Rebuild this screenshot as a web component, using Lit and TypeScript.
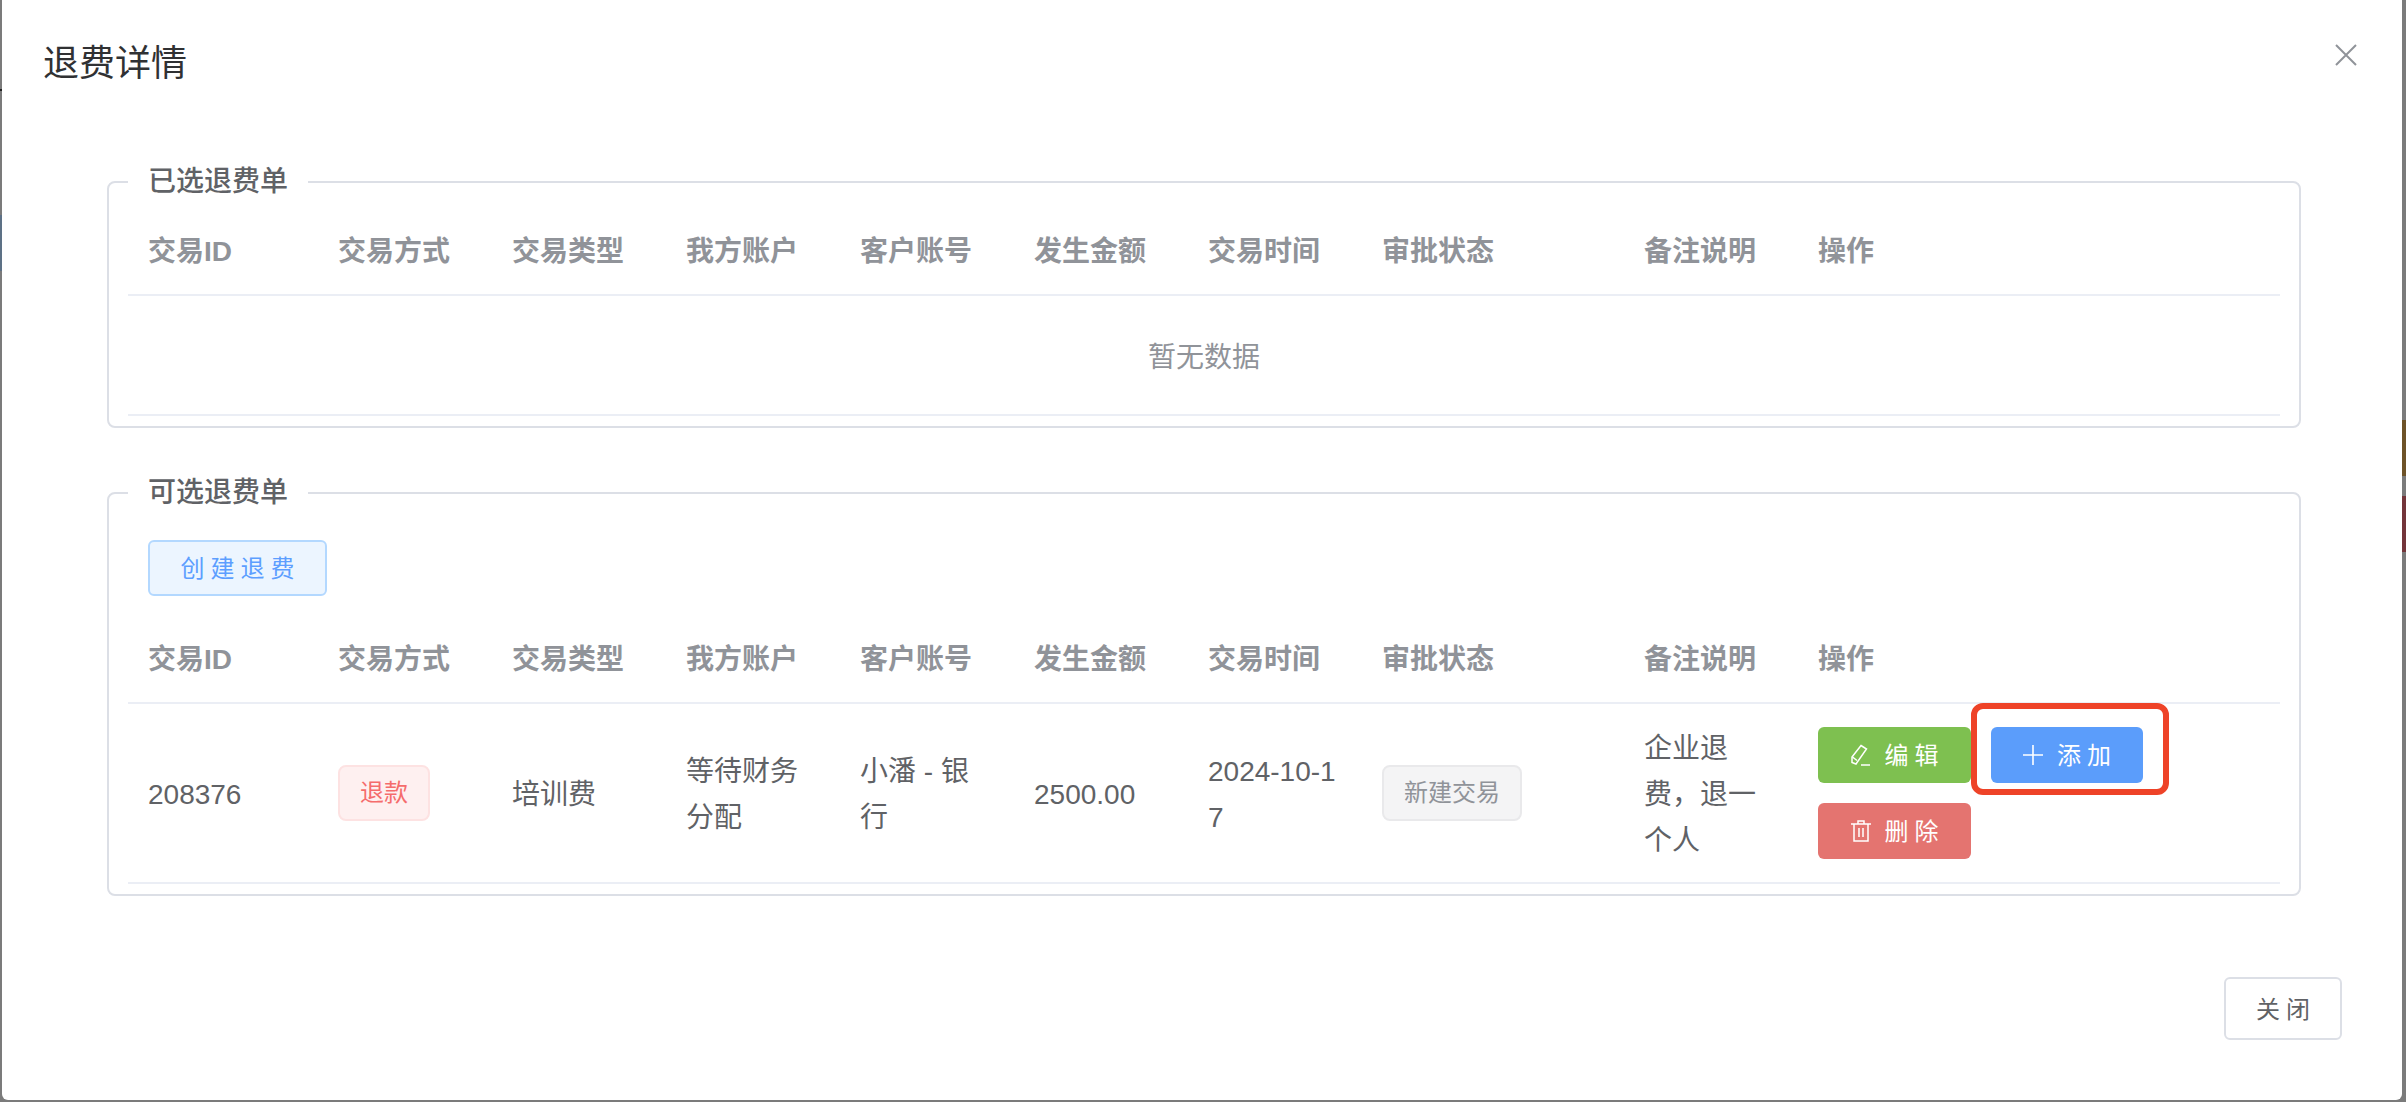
import { LitElement, html, css } from "lit";
import { customElement } from "lit/decorators.js";

const HEADERS = ["交易ID", "交易方式", "交易类型", "我方账户", "客户账号", "发生金额", "交易时间", "审批状态", "备注说明", "操作"];

@customElement("app-root")
export class AppRoot extends LitElement {
  static styles = css`
    :host {
      display: block;
      position: relative;
      width: 2406px;
      height: 1102px;
      overflow: hidden;
      background: #7b7b7b;
      font-family: "Liberation Sans", "Noto Sans CJK SC", sans-serif;
      color: #606266;
    }
    * { box-sizing: border-box; }
    .strip { position: absolute; right: 0; width: 4px; height: 56px; }
    .strip.brown { top: 420px; background: #6e5328; }
    .strip.red { top: 496px; background: #73353a; }
    .strip.blue { right: auto; left: 0; width: 2px; top: 215px; background: #5d7186; }
    .strip.tick { right: auto; left: 0; width: 2px; top: 89px; height: 2px; background: #222; }
    .modal {
      margin-left: 2px;
      width: 2400px;
      height: 1100px;
      background: #fff;
      border-radius: 0 0 6px 6px;
      display: flex;
      flex-direction: column;
      position: relative;
    }
    .header {
      display: flex;
      justify-content: space-between;
      align-items: flex-start;
      height: 162px;
      padding: 40px 44px 0 41px;
    }
    .title { font-size: 36px; line-height: 48px; color: #303133; }
    .close { width: 24px; height: 24px; margin-top: 3px; display: block; }
    .sets { display: flex; flex-direction: column; gap: 45px; padding: 0 101px 0 105px; }
    fieldset {
      margin: 0;
      min-width: 0;
      border: 2px solid #dcdfe6;
      border-radius: 8px;
      padding: 0 19px 10px;
    }
    legend {
      margin-left: 0;
      padding: 0 20px;
      font-size: 28px;
      line-height: 40px;
      font-weight: 500;
      color: #606266;
    }
    .row {
      display: grid;
      grid-template-columns: 190px 174px 174px 174px 174px 174px 174px 262px 174px 482px;
      align-items: center;
      border-bottom: 2px solid #ebeef5;
      font-size: 28px;
      line-height: 46px;
    }
    .row > div { padding: 4px 20px 0; word-break: break-all; min-width: 0; }
    .row > div.flush { padding-top: 0; }
    .head { height: 92px; margin-top: 2px; color: #909399; font-weight: 700; }
    .head > div { padding-top: 6px; }
    .body { height: 180px; }
    .empty {
      height: 120px;
      display: flex;
      align-items: center;
      justify-content: center;
      border-bottom: 2px solid #ebeef5;
      font-size: 28px;
      color: #909399;
    }
    .tools { padding: 27px 0 0 20px; }
    .tools + .head { margin-top: 16px; }
    .btn {
      height: 56px;
      border: 2px solid transparent;
      border-radius: 6px;
      font: inherit;
      font-size: 24px;
      line-height: 1;
      letter-spacing: 6px;
      display: inline-flex;
      align-items: center;
      justify-content: center;
      gap: 14px;
      padding: 2px 0 0 6px;
      color: #fff;
      white-space: nowrap;
    }
    .create { width: 179px; background: #ecf5ff; border-color: #b3d8ff; color: #5c9eff; }
    .edit { width: 153px; background: #7ec050; }
    .del { width: 153px; background: #e47470; }
    .add { width: 152px; background: #5b9dfb; }
    .btn svg { display: block; flex: none; margin-bottom: 2px; }
    .actions { display: grid; grid-template-columns: 153px 152px; column-gap: 20px; row-gap: 20px; }
    .hl { position: relative; height: 56px; }
    .ring {
      position: absolute;
      left: -20px;
      right: -26px;
      top: -24px;
      bottom: -12px;
      border: 6px solid #ee4328;
      border-radius: 12px;
      pointer-events: none;
    }
    .tag {
      display: block;
      width: max-content;
      height: 56px;
      padding: 0 20px;
      border: 2px solid;
      border-radius: 8px;
      font-size: 24px;
      line-height: 52px;
      white-space: nowrap;
    }
    .tag.danger { background: #fef0f0; border-color: #fde2e2; color: #f56c6c; }
    .tag.info { background: #f4f4f5; border-color: #e9e9eb; color: #909399; }
    .footer { margin-top: auto; padding: 0 60px 60px 0; display: flex; justify-content: flex-end; }
    .shut { width: 118px; height: 63px; background: #fff; border-color: #dcdfe6; color: #606266; }
  `;

  private head() {
    return html`<div class="row head">${HEADERS.map((h) => html`<div>${h}</div>`)}</div>`;
  }

  render() {
    return html`
      <div class="strip brown"></div>
      <div class="strip red"></div>
      <div class="strip blue"></div>
      <div class="strip tick"></div>
      <div class="modal">
        <div class="header">
          <div class="title">退费详情</div>
          <svg class="close" viewBox="0 0 24 24" fill="none" stroke="#909399" stroke-width="2">
            <path d="M2 2 22 22M22 2 2 22"></path>
          </svg>
        </div>
        <div class="sets">
          <fieldset>
            <legend>已选退费单</legend>
            ${this.head()}
            <div class="empty">暂无数据</div>
          </fieldset>
          <fieldset>
            <legend>可选退费单</legend>
            <div class="tools"><button class="btn create">创建退费</button></div>
            ${this.head()}
            <div class="row body">
              <div>208376</div>
              <div class="flush"><span class="tag danger">退款</span></div>
              <div>培训费</div>
              <div>等待财务分配</div>
              <div>小潘 - 银行</div>
              <div>2500.00</div>
              <div>2024-10-17</div>
              <div class="flush"><span class="tag info">新建交易</span></div>
              <div>企业退费，退一个人</div>
              <div class="flush">
                <div class="actions">
                  <button class="btn edit">
                    <svg width="20" height="22" viewBox="0 0 20 22" fill="none" stroke="#fff" stroke-width="1.5">
                      <path d="M10 1.5 15.5 5 5 20 1 18.5 1 13Z"></path>
                      <path d="M1.5 13 6 16.5"></path>
                      <path d="M10 21H19"></path>
                    </svg>
                    编辑
                  </button>
                  <div class="hl">
                    <button class="btn add">
                      <svg width="20" height="20" viewBox="0 0 20 20" fill="none" stroke="#fff" stroke-width="1.6">
                        <path d="M10 0V20M0 10H20"></path>
                      </svg>
                      添加
                    </button>
                    <div class="ring"></div>
                  </div>
                  <button class="btn del">
                    <svg width="20" height="22" viewBox="0 0 20 22" fill="none" stroke="#fff" stroke-width="1.5">
                      <path d="M0 4H20M3 4V21H17V4M7 4V1H13V4M8 8V17M12 8V17"></path>
                    </svg>
                    删除
                  </button>
                </div>
              </div>
            </div>
          </fieldset>
        </div>
        <div class="footer"><button class="btn shut">关闭</button></div>
      </div>
    `;
  }
}
